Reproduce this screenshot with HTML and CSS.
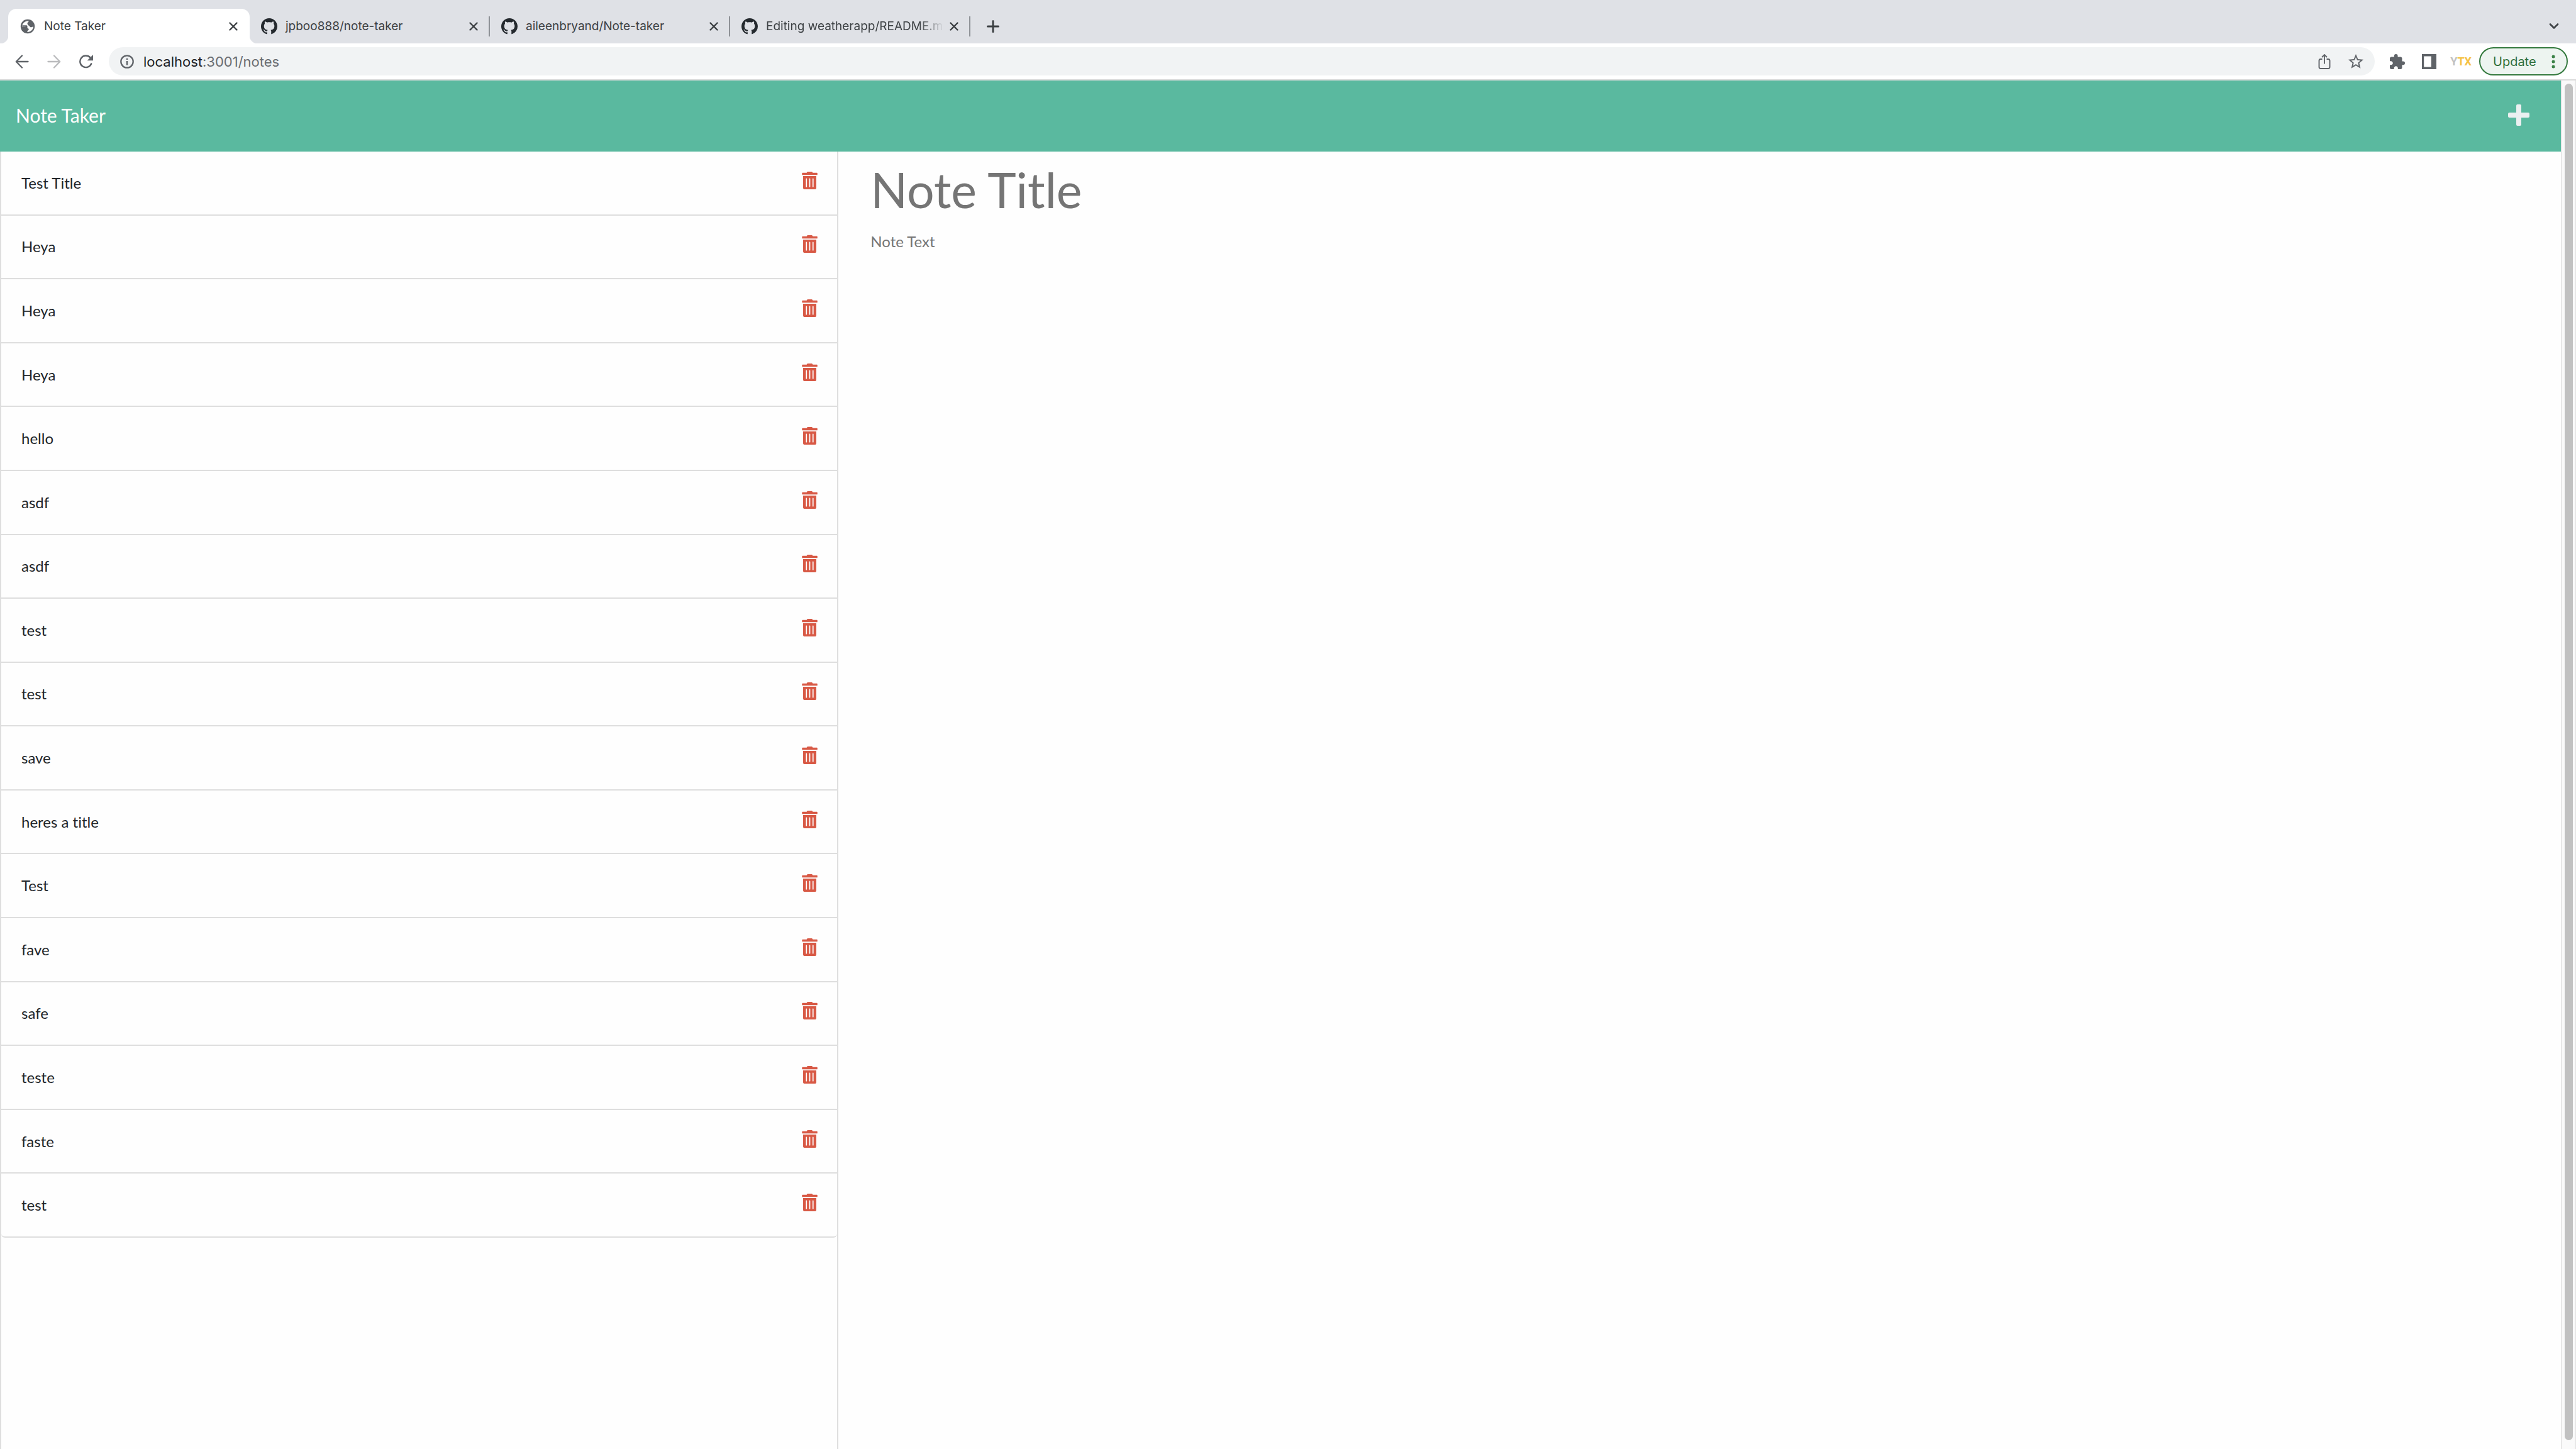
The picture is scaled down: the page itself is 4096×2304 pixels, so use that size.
FILE: index.html
```html
<!DOCTYPE html>
<html lang="en">
<head>
<meta charset="utf-8">
<title>Note Taker</title>
<link rel="stylesheet" href="styles.css">
</head>
<body>
<svg class="sprite" aria-hidden="true">
  <symbol id="close" viewBox="0 0 14 14"><path d="M1.500 1.500l11 11M12.500 1.500l-11 11" fill="none" stroke="currentColor" stroke-width="2.400" stroke-linecap="round"/></symbol>
  <symbol id="github" viewBox="0 0 16 16"><path fill="#24292e" fill-rule="evenodd" d="M8 0C3.580 0 0 3.580 0 8c0 3.540 2.290 6.530 5.470 7.590.4.070.55-.17.55-.38 0-.19-.01-.82-.01-1.490-2.010.37-2.530-.49-2.690-.94-.09-.23-.48-.94-.82-1.130-.28-.15-.68-.52-.01-.53.63-.01 1.080.58 1.230.82.72 1.210 1.870.87 2.330.66.07-.52.28-.87.51-1.070-1.780-.2-3.640-.89-3.640-3.950 0-.87.31-1.590.82-2.150-.08-.2-.36-1.020.08-2.120 0 0 .67-.21 2.200.82.64-.18 1.320-.27 2-.27s1.360.09 2 .27c1.530-1.040 2.200-.82 2.200-.82.44 1.100.16 1.920.08 2.120.51.56.82 1.270.82 2.150 0 3.070-1.870 3.750-3.650 3.950.29.25.54.73.54 1.480 0 1.070-.01 1.930-.01 2.200 0 .21.15.46.55.38A8.010 8.010 0 0 0 16 8c0-4.420-3.580-8-8-8z"/></symbol>
  <symbol id="trash" viewBox="0 0 448 512"><path fill="currentColor" d="M32 464a48 48 0 0 0 48 48h288a48 48 0 0 0 48-48V128H32zm272-256a16 16 0 0 1 32 0v224a16 16 0 0 1-32 0zm-96 0a16 16 0 0 1 32 0v224a16 16 0 0 1-32 0zm-96 0a16 16 0 0 1 32 0v224a16 16 0 0 1-32 0zM432 32H312l-9.400-18.700A24 24 0 0 0 281.100 0H166.800a23.720 23.720 0 0 0-21.400 13.300L136 32H16A16 16 0 0 0 0 48v32a16 16 0 0 0 16 16h416a16 16 0 0 0 16-16V48a16 16 0 0 0-16-16z"/></symbol>
</svg>

<div class="tab-strip">
  <div class="tab tab-active">
    <svg class="favicon" viewBox="0 0 26 26"><circle cx="13" cy="13" r="11.200" fill="#5f6368"/><path d="M14.500 4.200C14.900 6.300 12.300 6.400 12.500 8.600C12.700 10 13.500 10.200 13.500 11.400C16.500 11.100 15.800 13.800 17.500 14.200C19.500 14.500 20.500 13.400 22 13.500C21.500 18.500 17.800 21.800 12.500 21.900C11.800 19.600 15.200 19.500 14.700 17.300C14.500 15.600 11 16.300 11.600 13.500C9.300 13.500 7.500 13.600 4 13.500C4 8.500 8.500 4 14.500 4.200Z" fill="#fff"/><path d="M4.200 11.300H10.800C12.900 11.300 12.600 13.500 12.500 15.600C10.600 15.600 9.600 15 9.500 13.400H4.200Z" fill="#5f6368"/></svg>
    <span class="tab-title">Note Taker</span>
    <button class="tab-close" aria-label="Close tab"><svg><use href="#close"/></svg></button>
  </div>
  <div class="tab">
    <svg class="favicon"><use href="#github"/></svg>
    <span class="tab-title">jpboo888/note-taker</span>
    <button class="tab-close" aria-label="Close tab"><svg><use href="#close"/></svg></button>
  </div>
  <div class="tab">
    <svg class="favicon"><use href="#github"/></svg>
    <span class="tab-title">aileenbryand/Note-taker</span>
    <button class="tab-close" aria-label="Close tab"><svg><use href="#close"/></svg></button>
  </div>
  <div class="tab">
    <svg class="favicon"><use href="#github"/></svg>
    <span class="tab-title tab-title-fade">Editing weatherapp/README.m</span>
    <button class="tab-close" aria-label="Close tab"><svg><use href="#close"/></svg></button>
  </div>
  <button class="new-tab" aria-label="New tab"><svg viewBox="0 0 20 20"><path d="M10 1.500v17M1.500 10h17" fill="none" stroke="currentColor" stroke-width="3" stroke-linecap="round"/></svg></button>
  <button class="tab-search" aria-label="Search tabs"><svg viewBox="0 0 16 10"><path d="M2 1.500l6 6 6-6" fill="none" stroke="currentColor" stroke-width="2.600" stroke-linecap="round" stroke-linejoin="round"/></svg></button>
</div>

<div class="toolbar">
  <div class="nav-buttons">
    <button aria-label="Back"><svg viewBox="0 0 22 22"><path d="M20.500 11H2M11 1.500L1.800 11l9.200 9.500" fill="none" stroke="#5f6368" stroke-width="2.300" stroke-linecap="round" stroke-linejoin="round"/></svg></button>
    <button aria-label="Forward"><svg viewBox="0 0 22 22"><path d="M1.500 11H20M11 1.500l9.200 9.500-9.200 9.500" fill="none" stroke="#babbbd" stroke-width="2.300" stroke-linecap="round" stroke-linejoin="round"/></svg></button>
    <button aria-label="Reload"><svg viewBox="0 0 22 22"><path d="M19.200 14.300A9.300 9.300 0 1 1 17.400 4.400" fill="none" stroke="#5f6368" stroke-width="2.400" stroke-linecap="round"/><path d="M22 0v9.300h-9.300z" fill="#5f6368"/></svg></button>
  </div>
  <div class="address-bar">
    <button aria-label="Site information"><svg viewBox="0 0 22 22"><circle cx="11" cy="11" r="9.700" fill="none" stroke="#5f6368" stroke-width="2.300"/><path d="M11 10v6.500M11 5.700v2.300" stroke="#5f6368" stroke-width="2.400"/></svg></button>
    <span class="url" role="textbox" aria-label="Address"><span class="url-host">localhost</span>:3001/notes</span>
    <button aria-label="Share"><svg class="icon-24" viewBox="0 0 24 24"><path d="M8.500 8H6a2.500 2.500 0 0 0-2.500 2.500v10A2.500 2.500 0 0 0 6 23h12a2.500 2.500 0 0 0 2.500-2.500v-10A2.500 2.500 0 0 0 18 8h-2.500M12 15.500V2M8 5l4-4 4 4" fill="none" stroke="#5f6368" stroke-width="1.900"/></svg></button>
    <button aria-label="Bookmark this tab"><svg class="icon-24" viewBox="2 2 20 20"><path fill="#5f6368" d="M22 9.240l-7.190-.62L12 2 9.190 8.630 2 9.240l5.460 4.730L5.820 21 12 17.270 18.180 21l-1.630-7.030L22 9.240zM12 15.400l-3.760 2.270 1-4.280-3.320-2.880 4.380-.38L12 6.100l1.710 4.040 4.380.38-3.320 2.880 1 4.280L12 15.400z"/></svg></button>
  </div>
  <div class="extensions">
    <button aria-label="Extensions"><svg class="icon-24" viewBox="2 1 21 21"><path fill="#5f6368" d="M20.500 11H19V7c0-1.100-.9-2-2-2h-4V3.500a2.500 2.500 0 0 0-5 0V5H4c-1.100 0-1.990.9-1.990 2v3.800H3.500c1.490 0 2.700 1.210 2.700 2.700s-1.210 2.700-2.700 2.700H2V20c0 1.100.9 2 2 2h3.800v-1.500c0-1.490 1.210-2.700 2.700-2.700s2.700 1.210 2.700 2.700V22H17c1.100 0 2-.9 2-2v-4h1.500a2.500 2.500 0 0 0 0-5z"/></svg></button>
    <button aria-label="Side panel"><svg class="icon-24" viewBox="0 0 24 24"><path fill="#5f6368" fill-rule="evenodd" d="M1 0h23v24H1zM4.200 3.400v17.200h11.600V3.400z"/></svg></button>
    <button class="ytx" aria-label="YTX extension"><span class="ytx-first">Y</span>TX</button>
  </div>
  <button class="update">Update<svg viewBox="0 0 6 22"><circle cx="3" cy="3" r="2.500"/><circle cx="3" cy="11" r="2.500"/><circle cx="3" cy="19" r="2.500"/></svg></button>
</div>

<div class="viewport">
  <div class="page">
    <header class="navbar">
      <a class="brand" href="#">Note Taker</a>
      <button class="new-note" aria-label="New note"><svg viewBox="0 0 34 34"><path fill="#ecf0f1" d="M15 0h4a2 2 0 0 1 2 2v11h11a2 2 0 0 1 2 2v4a2 2 0 0 1-2 2H21v11a2 2 0 0 1-2 2h-4a2 2 0 0 1-2-2V21H2a2 2 0 0 1-2-2v-4a2 2 0 0 1 2-2h11V2a2 2 0 0 1 2-2z"/></svg></button>
    </header>
    <main class="content">
      <aside class="sidebar">
        <div class="card">
          <ul class="note-list">
            <li>Test Title<button aria-label="Delete note"><svg><use href="#trash"/></svg></button></li>
            <li>Heya<button aria-label="Delete note"><svg><use href="#trash"/></svg></button></li>
            <li>Heya<button aria-label="Delete note"><svg><use href="#trash"/></svg></button></li>
            <li>Heya<button aria-label="Delete note"><svg><use href="#trash"/></svg></button></li>
            <li>hello<button aria-label="Delete note"><svg><use href="#trash"/></svg></button></li>
            <li>asdf<button aria-label="Delete note"><svg><use href="#trash"/></svg></button></li>
            <li>asdf<button aria-label="Delete note"><svg><use href="#trash"/></svg></button></li>
            <li>test<button aria-label="Delete note"><svg><use href="#trash"/></svg></button></li>
            <li>test<button aria-label="Delete note"><svg><use href="#trash"/></svg></button></li>
            <li>save<button aria-label="Delete note"><svg><use href="#trash"/></svg></button></li>
            <li>heres a title<button aria-label="Delete note"><svg><use href="#trash"/></svg></button></li>
            <li>Test<button aria-label="Delete note"><svg><use href="#trash"/></svg></button></li>
            <li>fave<button aria-label="Delete note"><svg><use href="#trash"/></svg></button></li>
            <li>safe<button aria-label="Delete note"><svg><use href="#trash"/></svg></button></li>
            <li>teste<button aria-label="Delete note"><svg><use href="#trash"/></svg></button></li>
            <li>faste<button aria-label="Delete note"><svg><use href="#trash"/></svg></button></li>
            <li>test<button aria-label="Delete note"><svg><use href="#trash"/></svg></button></li>
          </ul>
        </div>
      </aside>
      <form class="editor">
        <input class="note-title" type="text" placeholder="Note Title" aria-label="Note title">
        <textarea class="note-text" placeholder="Note Text" aria-label="Note text"></textarea>
      </form>
    </main>
  </div>
  <div class="scrollbar"><div class="thumb"></div></div>
</div>
</body>
</html>
```
FILE: styles.css
```css
* {
  box-sizing: border-box;
}

body {
  margin: 0;
  min-height: 100vh;
  display: flex;
  flex-direction: column;
  background: #fefefe;
  color: #212529;
  font-family: Lato, sans-serif;
  font-size: 24px;
  line-height: 36px;
  font-variant-ligatures: no-common-ligatures;
}

button {
  display: flex;
  align-items: center;
  margin: 0;
  padding: 0;
  border: 0;
  background: none;
  color: inherit;
  font: inherit;
}

svg {
  display: block;
  flex: none;
}

.sprite {
  position: absolute;
  width: 0;
  height: 0;
}

/* Browser tabs */
.tab-strip {
  display: flex;
  height: 69px;
  padding: 14px 27px 0 13px;
  background: #dfe1e6;
  color: #3c4043;
  font-family: Inter, sans-serif;
  font-size: 19px;
  line-height: 24px;
}

.tab {
  position: relative;
  display: flex;
  align-items: center;
  gap: 13px;
  width: 382px;
  padding: 0 19px 0 18px;
}

.tab:not(.tab-active)::after {
  content: "";
  position: absolute;
  right: 0;
  top: 12px;
  width: 2px;
  height: 32px;
  background: #8f9297;
}

.tab-active {
  width: 384px;
  border-radius: 13px 13px 0 0;
  background: #fff;
}

.tab-active::before,
.tab-active::after {
  content: "";
  position: absolute;
  bottom: 0;
  width: 13px;
  height: 13px;
}

.tab-active::before {
  right: 100%;
  background: radial-gradient(circle at 0 0, #dfe1e6 13px, #fff 14px);
}

.tab-active::after {
  left: 100%;
  background: radial-gradient(circle at 100% 0, #dfe1e6 13px, #fff 14px);
}

.favicon {
  width: 26px;
  height: 26px;
}

.tab-title {
  flex: 1;
  min-width: 0;
  white-space: nowrap;
}

/* Long titles fade out before the close button */
.tab-title-fade {
  margin-right: -12px;
  -webkit-mask-image: linear-gradient(to left, transparent 8px, #000 48px);
  mask-image: linear-gradient(to left, transparent 8px, #000 48px);
}

.tab-close svg {
  width: 14px;
  height: 14px;
}

.new-tab {
  margin-left: 26px;
}

.new-tab svg {
  width: 20px;
  height: 20px;
}

.tab-search {
  margin-left: auto;
}

.tab-search svg {
  width: 16px;
  height: 10px;
}

/* Browser toolbar */
.toolbar {
  display: flex;
  align-items: center;
  height: 59px;
  padding: 6px 13px 6px 24px;
  border-bottom: 2px solid #dadada;
  background: #fff;
  font-family: Inter, sans-serif;
}

.nav-buttons {
  display: flex;
  gap: 29px;
  margin-right: 25px;
}

.nav-buttons svg,
.address-bar svg {
  width: 22px;
  height: 22px;
}

.address-bar {
  flex: 1;
  display: flex;
  align-items: center;
  gap: 26px;
  height: 45px;
  padding: 0 18px;
  border-radius: 23px;
  background: #f1f3f4;
}

.url {
  flex: 1;
  margin-left: -11px;
  color: #6a6d71;
  font-size: 22px;
  line-height: 32px;
}

.url-host {
  color: #202124;
}

.toolbar .icon-24 {
  width: 24px;
  height: 24px;
}

.extensions {
  display: flex;
  align-items: center;
  gap: 26px;
  margin: 0 12px 0 24px;
}

.ytx {
  margin-left: -4px;
  color: #f6c244;
  font-family: Roboto, sans-serif;
  font-size: 18px;
  font-weight: 700;
}

.ytx-first {
  color: #c0c0c0;
}

.update {
  justify-content: space-between;
  width: 141px;
  height: 45px;
  padding: 0 18px 0 20px;
  border: 2px solid #33793d;
  border-radius: 23px;
  background: #edf4f0;
  color: #2f6f3a;
  font-size: 20px;
}

.update svg {
  width: 6px;
  height: 22px;
  fill: #3a8146;
}

/* Page */
.viewport {
  flex: 1;
  display: flex;
}

.page {
  flex: 1;
  display: flex;
  flex-direction: column;
}

.navbar {
  display: flex;
  align-items: center;
  justify-content: space-between;
  height: 113px;
  padding: 0 50px 4px 25px;
  background: #5ab99f;
}

.brand {
  color: #fff;
  font-size: 30px;
  text-decoration: none;
}

.new-note svg {
  width: 34px;
  height: 34px;
}

.content {
  flex: 1;
  display: grid;
  grid-template-columns: 1fr 2fr;
}

.sidebar {
  display: flex;
  padding-right: 24px;
}

.card {
  flex: 1;
  border: 2px solid #dedede;
  border-width: 0 2px;
}

.note-list {
  display: grid;
  grid-auto-rows: 1fr;
  min-height: 1727px;
  margin: 0;
  padding: 0;
  list-style: none;
}

.note-list li {
  display: flex;
  align-items: center;
  justify-content: space-between;
  padding: 0 31px 0 32px;
  border-bottom: 2px solid #dedede;
}

.note-list li:last-child {
  border-radius: 0 0 6px 6px;
}

.note-list button {
  padding-bottom: 8px;
  color: #d85945;
}

.note-list svg {
  width: 25px;
  height: 28px;
}

/* Editor */
.editor {
  display: flex;
  flex-direction: column;
  gap: 4px;
  padding: 0 25px;
}

.note-title,
.note-text {
  width: 100%;
  margin: 0;
  padding: 0;
  border: 2px solid transparent;
  outline: 0;
  background: none;
  color: #212529;
  font-family: inherit;
}

.note-title {
  height: 119px;
  font-size: 77px;
}

.note-text {
  flex: 1;
  font-size: 24px;
  line-height: 36px;
  resize: none;
}

.note-title::placeholder,
.note-text::placeholder {
  color: #757575;
  opacity: 1;
}

/* Scrollbar */
.scrollbar {
  display: flex;
  width: 24px;
  padding: 5px 3px 14px 4px;
  border: 2px solid #e8e8e8;
  border-width: 0 2px;
  background: #fafafa;
}

.thumb {
  flex: 1;
  border-radius: 7px;
  background: #c1c1c1;
}
```
